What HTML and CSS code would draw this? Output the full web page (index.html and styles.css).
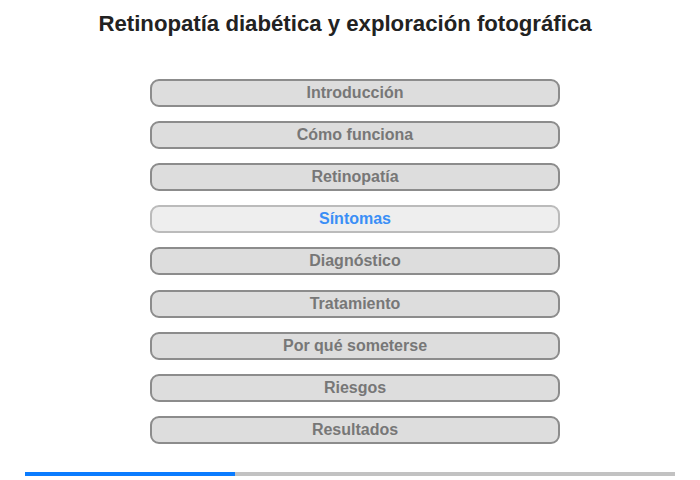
FILE: index.html
```html
<!DOCTYPE html>
<html lang="es">
<head>
  <meta charset="UTF-8" />
  <title>Retinopatía diabética y exploración fotográfica</title>
  <link rel="stylesheet" href="styles.css">
</head>
<body>
  <h1 class="title">Retinopatía diabética y exploración fotográfica</h1>

  <!-- MENU -->
  <nav class="menu">
    <a class="item" href="#">Introducción</a>
    <a class="item" href="#">Cómo funciona</a>
    <a class="item" href="#">Retinopatía</a>
    <a class="item active" href="#">Síntomas</a>
    <a class="item" href="#">Diagnóstico</a>
    <a class="item" href="#">Tratamiento</a>
    <a class="item" href="#">Por qué someterse</a>
    <a class="item" href="#">Riesgos</a>
    <a class="item" href="#">Resultados</a>
  </nav>

  <!-- PROGRESS -->
  <div class="progress"><div class="progress-fill" style="width:32.3%"></div></div>
</body>
</html>
```

FILE: styles.css
```css
body{margin:0;padding:0;font-family:'Liberation Sans',Arial,sans-serif;background:#fff;width:700px;height:480px;overflow:hidden}
.title{margin:11px 0 0;height:26px;line-height:26px;font-size:22.2px;font-weight:bold;color:#222;text-align:center;padding-right:10px}
.menu{display:flex;flex-direction:column;gap:14.12px;width:410px;margin:42px 0 0 150px}
.item{box-sizing:border-box;height:28px;line-height:24px;border:2px solid #8c8c8c;border-radius:9px;background:#ddd;color:#777;font-size:16px;font-weight:bold;text-align:center;text-decoration:none}
.item.active{background:#eee;border-color:#bbb;color:#3a8ef6}
.progress{margin:28px 25px 0;height:4px;background:#c2c2c2}
.progress-fill{height:100%;background:#0a7cff}
```
